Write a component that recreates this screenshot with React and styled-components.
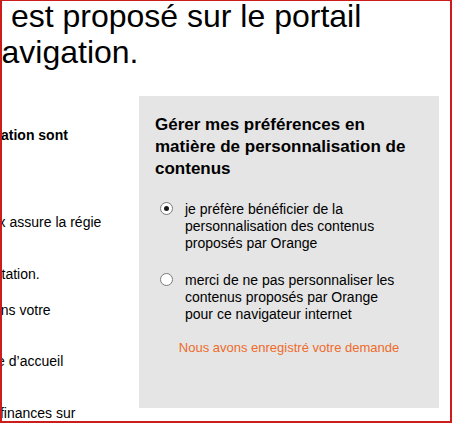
import React, { useState } from 'react';
import styled, { createGlobalStyle } from 'styled-components';

const red = '#cc1c1c';
const panelGray = '#e5e5e5';
const orange = '#ee6b2b';
const ink = '#000000';

const GlobalStyle = createGlobalStyle`
  html, body {
    margin: 0;
    padding: 0;
    background: #ffffff;
  }
  body {
    font-family: "Liberation Sans", Arial, sans-serif;
    color: ${ink};
  }
`;

const Frame = styled.div`
  width: 452px;
  height: 423px;
  box-sizing: border-box;
  border: 2px solid ${red};
  border-top-width: 1px;
  overflow: hidden;
  background: #ffffff;
`;

const Heading = styled.h1`
  margin: -3px 0 0 0;
  font-size: 32px;
  font-weight: normal;
  line-height: 36px;
`;

const HeadingLine = styled.span`
  display: block;
  white-space: pre;
  margin-left: ${({ $shift }) => $shift || 0}px;
`;

const Row = styled.div`
  display: flex;
  margin-top: 26px;
`;

const LeftColumn = styled.div`
  flex: 0 0 137px;
  display: flex;
  flex-direction: column;
  font-size: 14px;
  line-height: 16px;
`;

const ClippedLine = styled.p`
  margin: ${({ $gap }) => $gap}px 0 0 ${({ $shift }) => $shift}px;
  white-space: nowrap;
  font-weight: ${({ $bold }) => ($bold ? 'bold' : 'normal')};
`;

const Panel = styled.section`
  width: 300px;
  height: 312px;
  box-sizing: border-box;
  padding: 18px 16px;
  background: ${panelGray};
`;

const PanelTitle = styled.h2`
  margin: 0;
  font-size: 17px;
  font-weight: bold;
  line-height: 22px;
`;

const Choices = styled.div`
  display: flex;
  flex-direction: column;
  gap: 20px;
  margin-top: 21px;
`;

const Choice = styled.label`
  display: flex;
  align-items: flex-start;
  padding-left: 5px;
  font-size: 14px;
  line-height: 17px;
  cursor: pointer;
`;

const Radio = styled.span`
  flex: 0 0 13px;
  width: 13px;
  height: 13px;
  margin-top: 1px;
  box-sizing: border-box;
  border: 1px solid #7a7a7a;
  border-radius: 50%;
  background: #ffffff;
  display: flex;
  align-items: center;
  justify-content: center;

  &::after {
    content: '';
    width: 5px;
    height: 5px;
    border-radius: 50%;
    background: ${({ $checked }) => ($checked ? '#1a1a1a' : 'transparent')};
  }
`;

const ChoiceText = styled.span`
  margin-left: 12px;
  max-width: 222px;
`;

const Notice = styled.p`
  margin: 17px 0 0 0;
  font-size: 13px;
  line-height: 16px;
  color: ${orange};
  text-align: center;
`;

const leftLines = [
  { text: 'ation sont', gap: 31, shift: -1, bold: true },
  { text: 'x assure la régie', gap: 71, shift: -3.4 },
  { text: 'tation.', gap: 36, shift: -0.5 },
  { text: 'ns votre', gap: 20, shift: -1.2 },
  { text: 'e d’accueil', gap: 35, shift: -4.9 },
  { text: 'finances sur', gap: 36, shift: -2.1 },
];

const choices = [
  { id: 'yes', label: 'je préfère bénéficier de la personnalisation des contenus proposés par Orange' },
  { id: 'no', label: 'merci de ne pas personnaliser les contenus proposés par Orange pour ce navigateur internet' },
];

const App = () => {
  const [choice, setChoice] = useState('yes');

  return (
    <>
      <GlobalStyle />
      <Frame>
        <Heading>
          <HeadingLine>{' est proposé sur le portail'}</HeadingLine>
          <HeadingLine $shift={-18.3}>navigation.</HeadingLine>
        </Heading>
        <Row>
          <LeftColumn>
            {leftLines.map((line) => (
              <ClippedLine key={line.text} $gap={line.gap} $shift={line.shift} $bold={line.bold}>
                {line.text}
              </ClippedLine>
            ))}
          </LeftColumn>
          <Panel>
            <PanelTitle>Gérer mes préférences en matière de personnalisation de contenus</PanelTitle>
            <Choices>
              {choices.map((c) => (
                <Choice key={c.id} onClick={() => setChoice(c.id)}>
                  <Radio $checked={choice === c.id} />
                  <ChoiceText>{c.label}</ChoiceText>
                </Choice>
              ))}
            </Choices>
            <Notice>Nous avons enregistré votre demande</Notice>
          </Panel>
        </Row>
      </Frame>
    </>
  );
};

export default App;
